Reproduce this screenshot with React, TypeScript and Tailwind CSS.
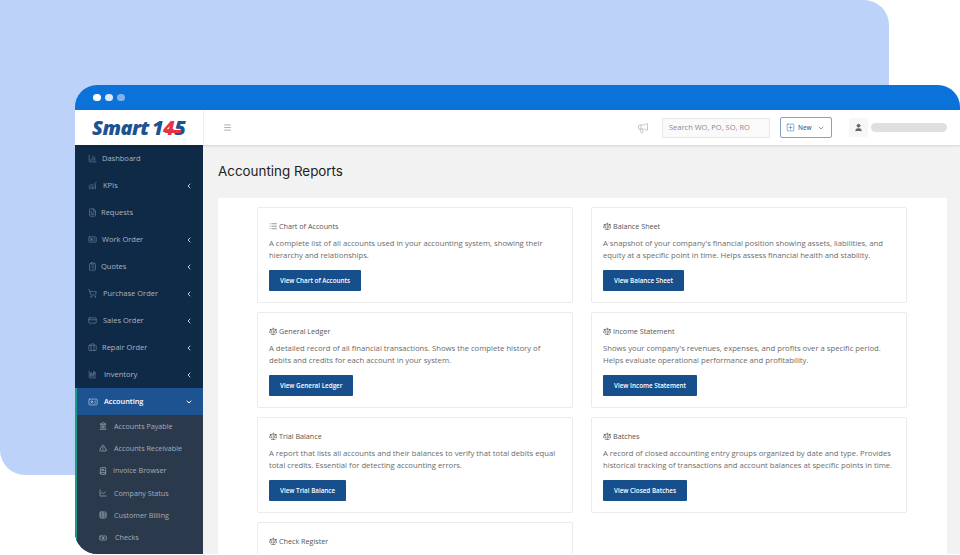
import { ChartColumn, ChevronLeft, ChevronDown, FileText, IdCard, ClipboardList, ShoppingCart, CreditCard, Briefcase, Landmark, Scale, List, ChartLine, Table, Banknote, Menu, Megaphone, SquarePlus, User, BookText, ChartNoAxesCombined, ChartColumnStacked, TriangleAlert } from 'lucide-react'

const NAV = [
  { label: 'Dashboard', icon: ChartColumn, gap: 'ml-[5px]' },
  { label: 'KPIs', icon: ChartNoAxesCombined, arrow: true, gap: 'ml-[6px]' },
  { label: 'Requests', icon: FileText, gap: 'ml-[4px]' },
  { label: 'Work Order', icon: IdCard, arrow: true, gap: 'ml-[5px]' },
  { label: 'Quotes', icon: ClipboardList, arrow: true, gap: 'ml-[4px]' },
  { label: 'Purchase Order', icon: ShoppingCart, arrow: true, gap: 'ml-[6px]' },
  { label: 'Sales Order', icon: CreditCard, arrow: true, gap: 'ml-[6px]' },
  { label: 'Repair Order', icon: Briefcase, arrow: true, gap: 'ml-[5px]' },
  { label: 'Inventory', icon: ChartColumnStacked, arrow: true, gap: 'ml-[7px]' },
]

const SUB = [
  { label: 'Accounts Payable', icon: Landmark, gap: 'ml-[7px]' },
  { label: 'Accounts Receivable', icon: TriangleAlert, gap: 'ml-[7px]' },
  { label: 'Invoice Browser', icon: BookText, gap: 'ml-[6px]' },
  { label: 'Company Status', icon: ChartLine, gap: 'ml-[7px]' },
  { label: 'Customer Billing', icon: Table, gap: 'ml-[7px]' },
  { label: 'Checks', icon: Banknote, gap: 'ml-[8px]' },
]

const REPORTS = [
  {
    title: 'Chart of Accounts',
    icon: List,
    text: 'A complete list of all accounts used in your accounting system, showing their hierarchy and relationships.',
    button: 'View Chart of Accounts',
  },
  {
    title: 'Balance Sheet',
    icon: Scale,
    text: "A snapshot of your company's financial position showing assets, liabilities, and equity at a specific point in time. Helps assess financial health and stability.",
    button: 'View Balance Sheet',
  },
  {
    title: 'General Ledger',
    icon: Scale,
    text: 'A detailed record of all financial transactions. Shows the complete history of debits and credits for each account in your system.',
    button: 'View General Ledger',
  },
  {
    title: 'Income Statement',
    icon: Scale,
    text: "Shows your company's revenues, expenses, and profits over a specific period. Helps evaluate operational performance and profitability.",
    button: 'View Income Statement',
  },
  {
    title: 'Trial Balance',
    icon: Scale,
    text: 'A report that lists all accounts and their balances to verify that total debits equal total credits. Essential for detecting accounting errors.',
    button: 'View Trial Balance',
  },
  {
    title: 'Batches',
    icon: Scale,
    text: 'A record of closed accounting entry groups organized by date and type. Provides historical tracking of transactions and account balances at specific points in time.',
    button: 'View Closed Batches',
  },
  {
    title: 'Check Register',
    icon: Scale,
    text: 'A detailed record of all checks written and cash disbursements from your accounts.',
    button: 'View Check Register',
  },
]

function Sidebar() {
  return (
    <aside className="w-[128px] shrink-0 bg-[#0f2a47] overflow-hidden">
      {NAV.map((n) => (
        <div key={n.label} className="h-[27px] flex items-center pl-[13px] pr-[10px] text-[7.5px] text-[#a9b5c2]">
          <n.icon className="w-[9px] h-[9px] text-[#7f8d9d] shrink-0" strokeWidth={1.5} />
          <span className={n.gap}>{n.label}</span>
          {n.arrow && <ChevronLeft className="w-[8px] h-[8px] ml-auto text-[#c5ced7]" strokeWidth={3} />}
        </div>
      ))}
      <div className="h-[27px] flex items-center pl-[13px] pr-[10px] text-[7.3px] font-semibold text-white bg-[#1d5390] border-l-2 border-[#1c9c86]">
        <IdCard className="w-[10px] h-[10px] text-[#c4d3e4] shrink-0 -ml-[2px]" strokeWidth={1.5} />
        <span className="ml-[6px]">Accounting</span>
        <ChevronDown className="w-[8px] h-[8px] ml-auto text-white" strokeWidth={3} />
      </div>
      <div className="bg-[#2a3a4c] border-l-2 border-[#1c9c86] h-[200px]">
        {SUB.map((s) => (
          <div key={s.label} className="h-[22.3px] flex items-center pl-[22px] text-[7.2px] text-[#a3adb8]">
            <s.icon className="w-[8px] h-[8px] text-[#aab4bf] shrink-0" strokeWidth={2} />
            <span className={s.gap}>{s.label}</span>
          </div>
        ))}
      </div>
    </aside>
  )
}

function Logo() {
  return (
    <div className="w-[128px] shrink-0 flex items-center pl-[17px] italic font-extrabold tracking-[-0.5px] text-[#1c5390]">
      <span className="text-[20px]">Smart</span>
      <span className="ml-[3px] text-[20px]">1</span>
      <span className="relative text-[20px] text-[#e63241]">
        4
        <span className="absolute left-[2px] top-[17px] w-[16px] h-[3px] bg-[#e63241] -skew-x-12" />
      </span>
      <span className="text-[20px]">5</span>
    </div>
  )
}

function TopBar() {
  return (
    <header className="h-[35px] shrink-0 flex bg-white shadow-[0_1px_2px_rgba(0,0,0,0.12)] relative">
      <Logo />
      <div className="flex-1 flex items-center border-l border-[#eeeeee] pl-[19px] pr-[13px]">
        <Menu className="w-[9px] h-[9px] text-[#999999]" strokeWidth={2} />
        <Megaphone className="w-[12px] h-[12px] text-[#b5b5b5] ml-auto" strokeWidth={1.5} />
        <div className="ml-[13px] w-[108px] h-[20px] border border-[#e6e6e6] bg-[#fafafa] flex items-center pl-[6px] text-[7.5px] text-[#8b8b8b]">
          Search WO, PO, SO, RO
        </div>
        <div className="ml-[10px] w-[52px] h-[21px] rounded-[2px] border border-[#7fa3cc] flex items-center pl-[5px] text-[6.3px] font-semibold text-[#3f73ad]">
          <SquarePlus className="w-[9px] h-[9px]" strokeWidth={1.5} />
          <span className="ml-[3px]">New</span>
          <ChevronDown className="w-[8px] h-[8px] ml-auto mr-[6px]" strokeWidth={2} />
        </div>
        <div className="ml-[17px] w-[19px] h-[19px] bg-[#f7f7f7] rounded-[2px] flex items-center justify-center">
          <User className="w-[9px] h-[9px] text-[#666666] fill-[#666666]" strokeWidth={2} />
        </div>
        <div className="ml-[3px] w-[76px] h-[9px] rounded-full bg-[#dedfdf]" />
      </div>
    </header>
  )
}

function ReportCard({ report }: { report: (typeof REPORTS)[number] }) {
  return (
    <div className="h-[95.5px] bg-white border border-[#ebebeb] rounded-[2px] pl-[11px] pr-[12px] pt-[13px] overflow-hidden">
      <div className="flex items-center text-[7.2px] leading-[10px] text-[#555555]">
        <report.icon className="w-[8.5px] h-[8.5px] text-[#555555] mr-[1.5px]" strokeWidth={1.75} />
        {report.title}
      </div>
      <p className="mt-[6px] text-[7.7px] leading-[12px] text-[#6b6b6b]">{report.text}</p>
      <button className="mt-[9px] h-[21px] px-[11px] bg-[#174e8c] rounded-[1px] text-[6.3px] font-semibold text-white block">
        {report.button}
      </button>
    </div>
  )
}

export default function App() {
  return (
    <div className="relative w-[960px] h-[555px] bg-white overflow-hidden font-['Open_Sans',sans-serif]">
      <div className="absolute left-0 top-0 w-[889px] h-[475px] bg-[#bdd2f8] rounded-[25px] rounded-tl-none" />
      <div className="relative pt-[85px] pl-[75px] h-full">
        <div className="h-[469px] flex flex-col rounded-t-[22px] rounded-bl-[22px] overflow-hidden">
          <div className="h-[25px] shrink-0 bg-[#0a72d8] flex items-center pl-[18px] gap-[4.5px]">
            <span className="w-[7.5px] h-[7.5px] rounded-full bg-white" />
            <span className="w-[7.5px] h-[7.5px] rounded-full bg-[#dbe8fa]" />
            <span className="w-[7.5px] h-[7.5px] rounded-full bg-[#7fb2ee]" />
          </div>
          <TopBar />
          <div className="flex-1 flex min-h-0">
            <Sidebar />
            <main className="flex-1 bg-[#f2f2f2] pl-[15px] pr-[13px] overflow-hidden">
              <h1 className="mt-[16px] text-[13.4px] leading-[20px] text-[#222222] font-['Inter',sans-serif]">Accounting Reports</h1>
              <div className="mt-[17px] bg-white pt-[9px] pl-[39px] h-[400px]">
                <div className="grid grid-cols-[316px_316px] gap-x-[18px] gap-y-[9.5px]">
                  {REPORTS.map((r) => (
                    <ReportCard key={r.title} report={r} />
                  ))}
                </div>
              </div>
            </main>
          </div>
        </div>
      </div>
    </div>
  )
}
